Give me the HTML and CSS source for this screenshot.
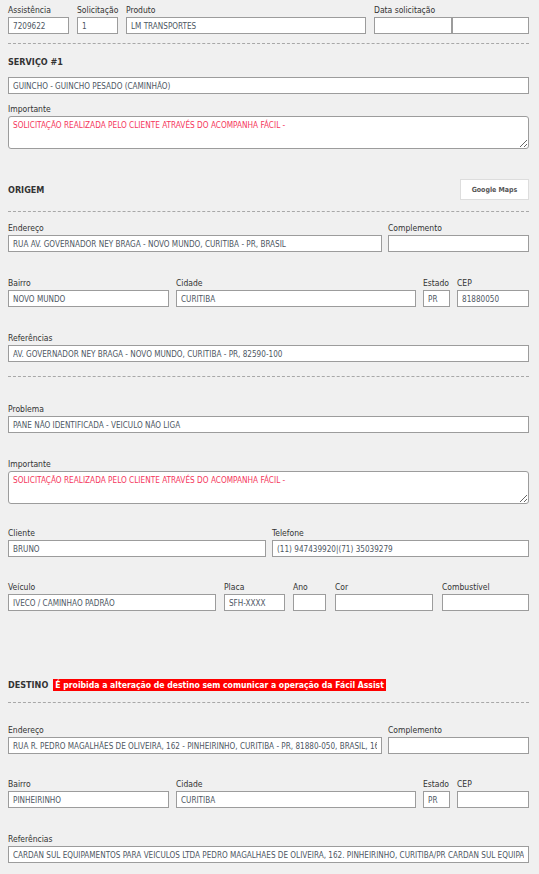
FILE: index.html
```html
<!DOCTYPE html>
<html lang="pt-BR">
<head>
<meta charset="utf-8">
<title>Serviço</title>
<link rel="stylesheet" href="styles.css">
</head>
<body>
<div class="page">
  <div class="row r-first">
    <div class="field w-assist"><label>Assistência</label><input class="inp" value="7209622" readonly></div>
    <div class="field w-solic"><label>Solicitação</label><input class="inp" value="1" readonly></div>
    <div class="field w-prod"><label>Produto</label><input class="inp" value="LM TRANSPORTES" readonly></div>
    <div class="field w-data"><label>Data solicitação</label>
      <div class="pair"><input class="inp" value="" readonly><input class="inp" value="" readonly></div>
    </div>
  </div>
  <div class="dash d1"></div>
  <div class="heading h-serv">SERVIÇO #1</div>
  <input class="inp full i-serv" value="GUINCHO - GUINCHO PESADO (CAMINHÃO)" readonly>
  <div class="field m10"><label>Importante</label><textarea class="ta" readonly>SOLICITAÇÃO REALIZADA PELO CLIENTE ATRAVÉS DO ACOMPANHA FÁCIL -</textarea></div>

  <div class="head-row h-origem">
    <div class="heading">ORIGEM</div>
    <button class="gmaps" type="button">Google Maps</button>
  </div>
  <div class="dash d2"></div>
  <div class="row m11">
    <div class="field w-end"><label>Endereço</label><input class="inp" value="RUA AV. GOVERNADOR NEY BRAGA - NOVO MUNDO, CURITIBA - PR, BRASIL" readonly></div>
    <div class="field w-comp"><label>Complemento</label><input class="inp" value="" readonly></div>
  </div>
  <div class="row m26 g7">
    <div class="field w-bairro"><label>Bairro</label><input class="inp" value="NOVO MUNDO" readonly></div>
    <div class="field w-cid"><label>Cidade</label><input class="inp" value="CURITIBA" readonly></div>
    <div class="field w-uf"><label>Estado</label><input class="inp" value="PR" readonly></div>
    <div class="field w-cep"><label>CEP</label><input class="inp" value="81880050" readonly></div>
  </div>
  <div class="field m26"><label>Referências</label><input class="inp" value="AV. GOVERNADOR NEY BRAGA - NOVO MUNDO, CURITIBA - PR, 82590-100" readonly></div>
  <div class="dash d3"></div>

  <div class="field m27"><label>Problema</label><input class="inp" value="PANE NÃO IDENTIFICADA - VEICULO NÃO LIGA" readonly></div>
  <div class="field m26"><label>Importante</label><textarea class="ta" readonly>SOLICITAÇÃO REALIZADA PELO CLIENTE ATRAVÉS DO ACOMPANHA FÁCIL -</textarea></div>
  <div class="row m24">
    <div class="field w-cli"><label>Cliente</label><input class="inp" value="BRUNO" readonly></div>
    <div class="field w-tel"><label>Telefone</label><input class="inp" value="(11) 947439920|(71) 35039279" readonly></div>
  </div>
  <div class="row m25 g-veic">
    <div class="field w-veic"><label>Veículo</label><input class="inp" value="IVECO / CAMINHAO PADRÃO" readonly></div>
    <div class="field w-placa"><label>Placa</label><input class="inp" value="SFH-XXXX" readonly></div>
    <div class="field w-ano"><label>Ano</label><input class="inp" value="" readonly></div>
    <div class="field w-cor"><label>Cor</label><input class="inp" value="" readonly></div>
    <div class="field w-comb"><label>Combustível</label><input class="inp" value="" readonly></div>
  </div>

  <div class="head-row h-dest">
    <div class="heading">DESTINO</div>
    <span class="alert">É proibida a alteração de destino sem comunicar a operação da Fácil Assist</span>
  </div>
  <div class="dash d4"></div>
  <div class="row m22">
    <div class="field w-end"><label>Endereço</label><input class="inp" value="RUA R. PEDRO MAGALHÃES DE OLIVEIRA, 162 - PINHEIRINHO, CURITIBA - PR, 81880-050, BRASIL, 162" readonly></div>
    <div class="field w-comp"><label>Complemento</label><input class="inp" value="" readonly></div>
  </div>
  <div class="row m25 g7">
    <div class="field w-bairro"><label>Bairro</label><input class="inp" value="PINHEIRINHO" readonly></div>
    <div class="field w-cid"><label>Cidade</label><input class="inp" value="CURITIBA" readonly></div>
    <div class="field w-uf"><label>Estado</label><input class="inp" value="PR" readonly></div>
    <div class="field w-cep"><label>CEP</label><input class="inp" value="" readonly></div>
  </div>
  <div class="field m26"><label>Referências</label><input class="inp" value="CARDAN SUL EQUIPAMENTOS PARA VEICULOS LTDA PEDRO MAGALHAES DE OLIVEIRA, 162. PINHEIRINHO, CURITIBA/PR CARDAN SUL EQUIPAMENTOS" readonly></div>
</div>
</body>
</html>
```

FILE: styles.css
```css
html, body {
  margin: 0;
  padding: 0;
  background: #f0f0f0;
}
body {
  font-family: "DejaVu Sans Condensed", "DejaVu Sans", sans-serif;
  font-stretch: condensed;
  color: #333;
  height: 874px;
  overflow: hidden;
}
.page {
  width: 521px;
  padding: 5px 0 0 8px;
}
.row {
  display: flex;
  gap: 6px;
}
.r-first { gap: 8px; }
.g7 { gap: 7px; }
.g-veic { gap: 8px; }
.field label {
  display: block;
  height: 12px;
  line-height: 11px;
  font-size: 8.5px;
  color: #333;
  white-space: nowrap;
}
.inp {
  box-sizing: border-box;
  display: block;
  width: 100%;
  height: 17px;
  margin: 0;
  padding: 0 4px;
  border: 1px solid #9c9c9c;
  border-radius: 0;
  background: #fff;
  font-family: "DejaVu Sans Condensed", "DejaVu Sans", sans-serif;
  font-stretch: condensed;
  font-size: 8.1px;
  color: #4e5763;
  outline: none;
}
.ta {
  box-sizing: border-box;
  display: block;
  width: 100%;
  height: 33px;
  margin: 0;
  padding: 3px 4px;
  border: 1px solid #9c9c9c;
  border-radius: 3px;
  background: #fff;
  font-family: "DejaVu Sans Condensed", "DejaVu Sans", sans-serif;
  font-stretch: condensed;
  font-size: 8.2px;
  line-height: 10px;
  color: #f5365c;
  resize: vertical;
  outline: none;
}
.full { width: 521px; }
.pair { display: flex; }
.pair .inp { width: 50%; }

.w-assist { width: 61px; }
.w-solic { width: 41px; }
.w-prod { width: 240px; }
.w-data { width: 155px; }
.w-end { width: 374px; }
.w-comp { width: 141px; }
.w-bairro { width: 161px; }
.w-cid { width: 240px; }
.w-uf { width: 27px; }
.w-cep { width: 72px; }
.w-cli { width: 258px; }
.w-tel { width: 257px; }
.w-veic { width: 208px; }
.w-placa { width: 61px; }
.w-ano { width: 33px; }
.w-cor { width: 98px; }
.w-comb { width: 87px; }
.w-ano + .w-cor { margin-left: 1px; }
.w-cor + .w-comb { margin-left: 1px; }

.dash {
  width: 521px;
  height: 0;
  border-top: 1px dashed #a8a8a8;
}
.d1 { margin-top: 9px; }
.d2 { margin-top: 11px; }
.d3 { margin-top: 14px; }
.d4 { margin-top: 11px; }

.heading {
  font-size: 9px;
  font-weight: bold;
  line-height: 14px;
  color: #333;
}
.h-serv { margin-top: 11px; }
.i-serv { margin-top: 8px; }

.head-row {
  display: flex;
  align-items: center;
  justify-content: space-between;
  width: 521px;
}
.h-origem { margin-top: 30px; height: 21px; }
.h-dest { margin-top: 68px; height: 12px; justify-content: flex-start; gap: 5px; }

.gmaps {
  box-sizing: border-box;
  width: 69px;
  height: 21px;
  margin: 0;
  padding: 0;
  background: #fff;
  border: 1px solid #ddd;
  font-family: "DejaVu Sans Condensed", "DejaVu Sans", sans-serif;
  font-stretch: condensed;
  font-size: 7px;
  font-weight: bold;
  color: #555;
}
.alert {
  display: inline-block;
  background: #ff0000;
  color: #fff;
  font-size: 8.6px;
  font-weight: bold;
  line-height: 12px;
  padding: 0 2px;
  white-space: nowrap;
}

.m10 { margin-top: 10px; }
.m11 { margin-top: 11px; }
.m22 { margin-top: 22px; }
.m24 { margin-top: 24px; }
.m25 { margin-top: 25px; }
.m26 { margin-top: 26px; }
.m27 { margin-top: 27px; }
```
